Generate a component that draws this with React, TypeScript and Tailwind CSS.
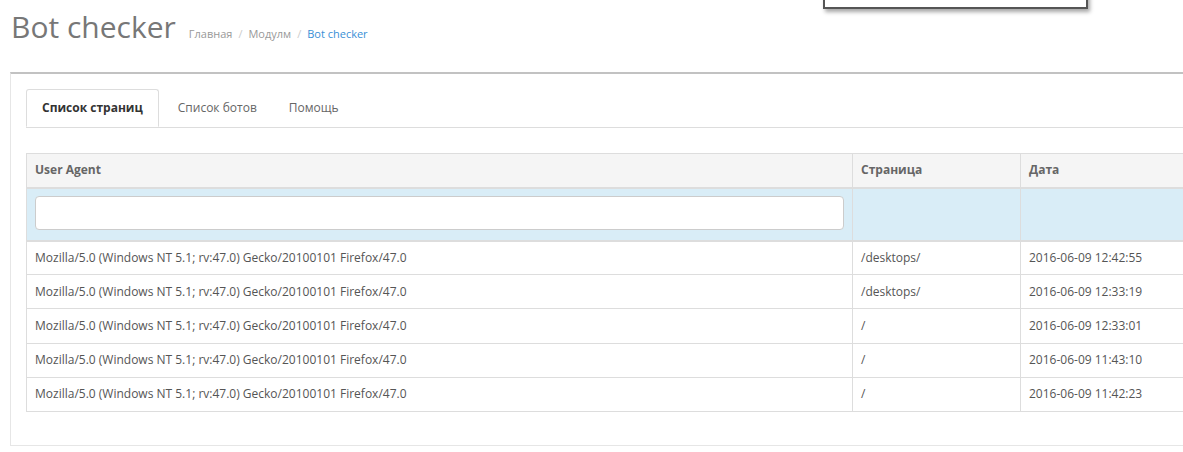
const rows = [
  ['/desktops/', '2016-06-09 12:42:55'],
  ['/desktops/', '2016-06-09 12:33:19'],
  ['/', '2016-06-09 12:33:01'],
  ['/', '2016-06-09 11:43:10'],
  ['/', '2016-06-09 11:42:23'],
]

const ua = 'Mozilla/5.0 (Windows NT 5.1; rv:47.0) Gecko/20100101 Firefox/47.0'

export default function App() {
  return (
    <div className="relative w-[1183px] h-[452px] overflow-hidden bg-white text-[12px] text-[#555] font-['Open_Sans',sans-serif]">
      {/* popup peeking in at the top */}
      <div className="absolute left-[823px] top-[-40px] w-[265px] h-[49px] bg-white border-2 border-[#555] shadow-[2px_3px_4px_rgba(0,0,0,0.35)]" />

      <div className="flex items-baseline gap-[13px] pl-[11px] pt-[5px] h-[72px]">
        <h1 className="text-[30px] font-normal text-[#777] leading-[44px]">Bot checker</h1>
        <div className="flex items-baseline text-[11px] text-[#999]">
          <span>Главная</span>
          <span className="px-[6px] text-[#ccc]">/</span>
          <span>Модулм</span>
          <span className="px-[6px] text-[#ccc]">/</span>
          <span className="text-[#3a8fd6]">Bot checker</span>
        </div>
      </div>

      <div className="ml-[10px] w-[1200px] border-t-2 border-t-[#c2c2c2] border-l border-l-[#e6e6e6] border-b border-b-[#e6e6e6] px-[15px] pt-[15px] pb-[33px]">
        <div className="flex border-b border-[#ddd]">
          <div className="px-[15px] h-[38px] flex items-center -mb-px bg-white border border-[#ddd] border-b-white rounded-t-[3px] font-bold text-[#333]">
            Список страниц
          </div>
          <div className="ml-[2px] px-[17px] h-[38px] flex items-center text-[#666]">Список ботов</div>
          <div className="px-[15px] h-[38px] flex items-center text-[#666]">Помощь</div>
        </div>

        <table className="mt-[25px] border-collapse table-fixed w-[1164px]">
          <colgroup>
            <col className="w-[826px]" />
            <col className="w-[168px]" />
            <col />
          </colgroup>
          <thead>
            <tr className="bg-[#f5f5f5] font-bold text-[#666]">
              <th className="text-left border border-[#ddd] border-b-2 h-[34px] px-[8px]">User Agent</th>
              <th className="text-left border border-[#ddd] border-b-2 px-[8px]">Страница</th>
              <th className="text-left border border-[#ddd] border-b-2 px-[8px]">Дата</th>
            </tr>
          </thead>
          <tbody>
            <tr className="bg-[#d9edf7]">
              <td className="border border-[#ddd] border-b-2 px-[8px] pt-[7px] pb-[10px]">
                <div className="h-[34px] bg-white border border-[#ccc] rounded-[4px]" />
              </td>
              <td className="border border-[#ddd] border-b-2" />
              <td className="border border-[#ddd] border-b-2" />
            </tr>
            {rows.map(([page, date], i) => (
              <tr key={i}>
                <td className="border border-[#ddd] px-[8px] h-[34.2px]">{ua}</td>
                <td className="border border-[#ddd] px-[8px]">{page}</td>
                <td className="border border-[#ddd] px-[8px]">{date}</td>
              </tr>
            ))}
          </tbody>
        </table>
      </div>
    </div>
  )
}
